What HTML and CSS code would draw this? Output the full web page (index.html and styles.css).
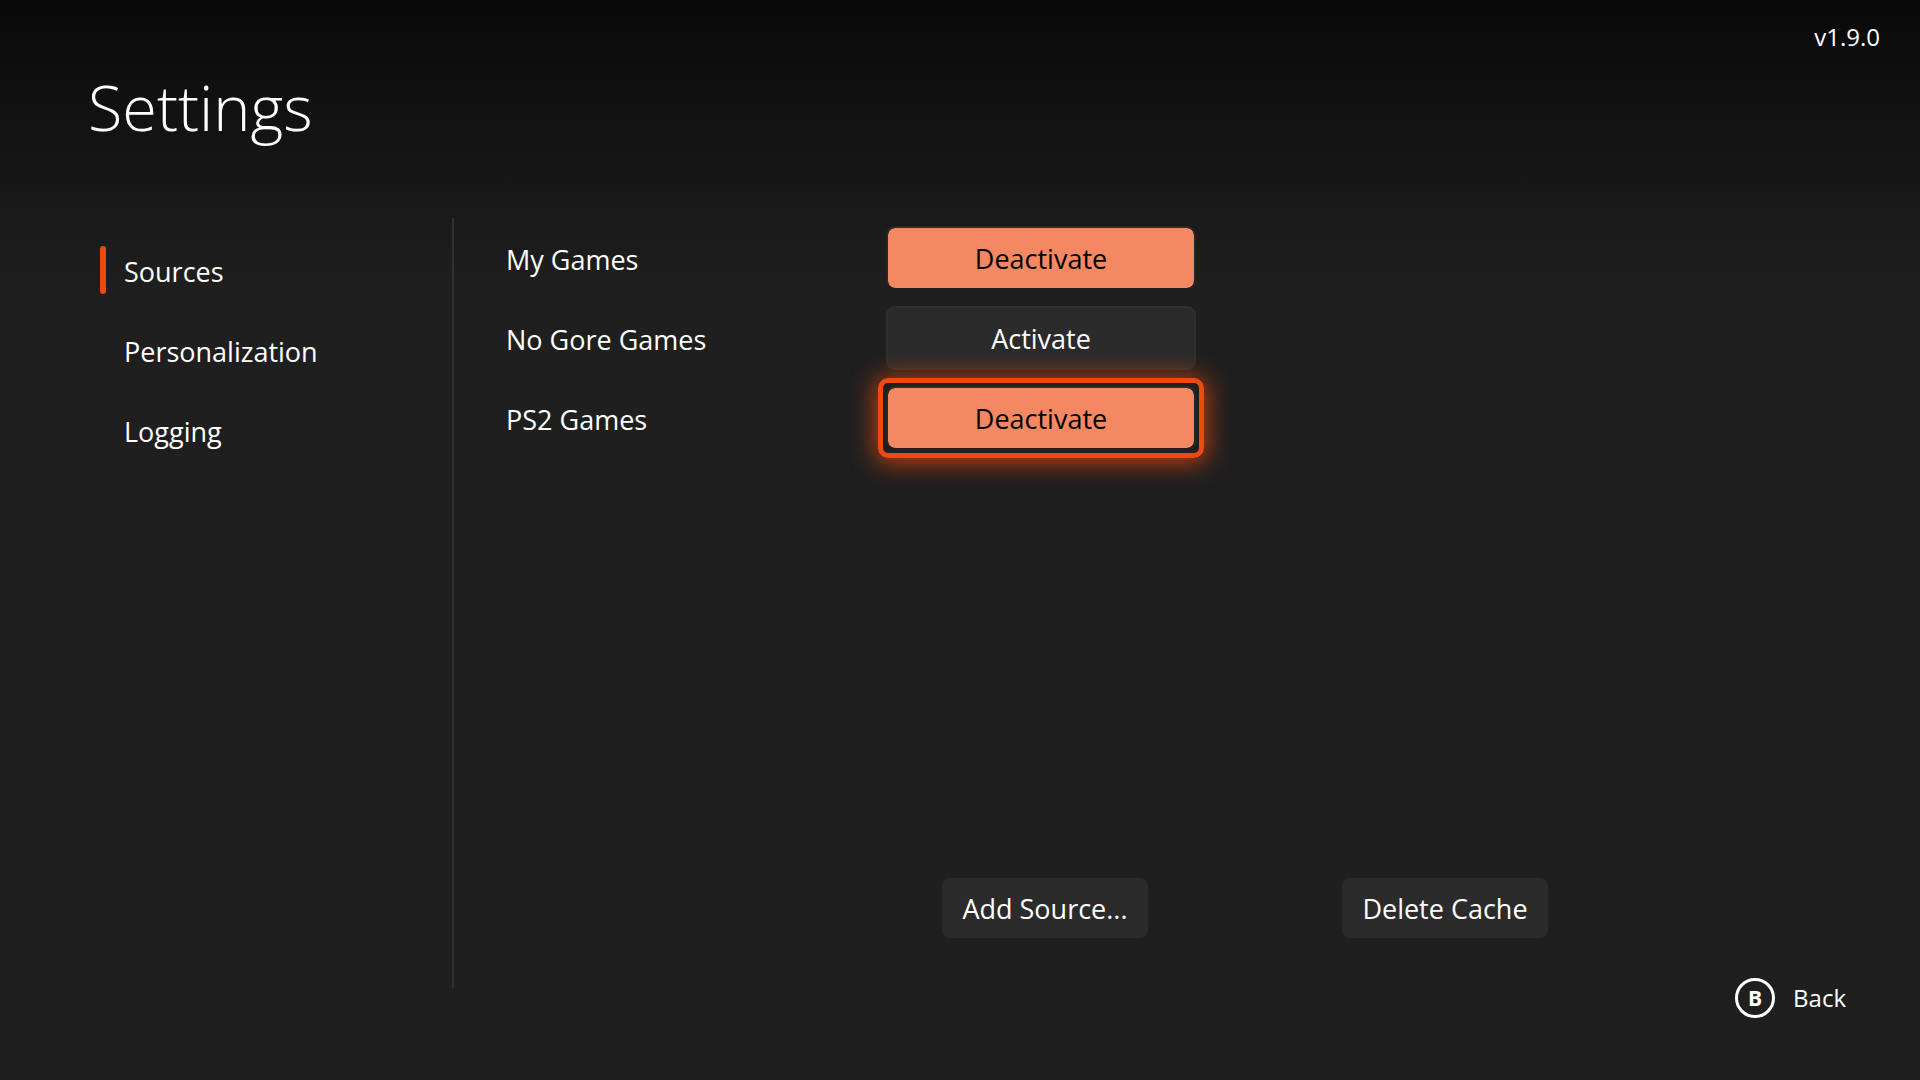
FILE: index.html
```html
<!DOCTYPE html>
<html lang="en">
<head>
<meta charset="utf-8">
<meta name="viewport" content="width=device-width, initial-scale=1">
<title>Settings</title>
<link rel="stylesheet" href="styles.css">
</head>
<body>
<div class="app">
  <header class="top">
    <h1>Settings</h1>
    <span class="version">v1.9.0</span>
  </header>
  <div class="body">
    <nav class="nav">
      <a href="#sources" class="active" aria-current="page">Sources</a>
      <a href="#personalization">Personalization</a>
      <a href="#logging">Logging</a>
    </nav>
    <main class="panel">
      <div class="sources">
        <div class="row"><span id="s1">My Games</span><button class="toggle on" aria-describedby="s1">Deactivate</button></div>
        <div class="row"><span id="s2">No Gore Games</span><button class="toggle" aria-describedby="s2">Activate</button></div>
        <div class="row"><span id="s3">PS2 Games</span><button class="toggle on focused" aria-describedby="s3">Deactivate</button></div>
      </div>
      <div class="actions">
        <button class="action">Add Source...</button>
        <button class="action">Delete Cache</button>
      </div>
    </main>
  </div>
  <footer class="foot">
    <button class="back"><span class="key">B</span><span>Back</span></button>
  </footer>
</div>
</body>
</html>
```

FILE: styles.css
```css
* { box-sizing: border-box; }
body {
  margin: 0;
  color: #fff;
  font: 27px/40px "Open Sans", "Noto Sans", sans-serif;
  background: #1f1f1f;
}
.app {
  min-height: 100vh;
  display: flex;
  flex-direction: column;
  background: linear-gradient(#090909, #1f1f1f 288px);
}
.top {
  display: flex;
  justify-content: space-between;
  align-items: flex-start;
  padding: 20px 40px 64px 88px;
}
h1 { margin: 40px 0 0; font-size: 63px; line-height: 94px; font-weight: 300; }
.version { font-size: 24px; line-height: 34px; }

.body { flex: 1; display: flex; }
.nav {
  width: 454px;
  padding: 24px 0 0 100px;
  border-right: 2px solid #303030;
}
.nav a {
  display: block;
  position: relative;
  height: 80px;
  padding-left: 24px;
  color: #fff;
  line-height: 60px;
  text-decoration: none;
}
.nav .active::before {
  content: "";
  position: absolute;
  left: 0;
  top: 4px;
  width: 6px;
  height: 48px;
  border-radius: 3px;
  background: #ee4a0f;
}
.panel {
  flex: 1;
  display: flex;
  flex-direction: column;
  justify-content: space-between;
  padding: 0 0 50px 52px;
}
.row { display: flex; align-items: center; height: 80px; }
.row > span { width: 380px; padding-top: 4px; }

button { padding: 0; font: inherit; color: inherit; cursor: pointer; }
.toggle {
  position: relative;
  width: 310px;
  height: 64px;
  padding-top: 2px;
  border: 2px solid #303030;
  border-radius: 9px;
  background: #2b2b2b;
}
.toggle.on {
  border-color: #2b2b2b #262626 #1f1f1f;
  background: #f38862;
  background-clip: padding-box;
  color: #000;
}
.focused::after {
  content: "";
  position: absolute;
  inset: -10px;
  border: 5px solid #ee4a0f;
  border-radius: 10px;
  box-shadow: 0 2px 24px 3px rgba(238, 74, 15, 0.75);
}
.actions { display: flex; gap: 194px; padding-left: 436px; }
.action {
  width: 206px;
  height: 60px;
  padding-top: 2px;
  border: 0;
  border-radius: 8px;
  background: #2b2b2b;
}

.foot { display: flex; justify-content: flex-end; padding: 0 74px 62px 0; margin-top: -10px; }
.back {
  display: flex;
  align-items: center;
  gap: 18px;
  border: 0;
  background: none;
  font-size: 24px;
}
.key {
  width: 40px;
  height: 40px;
  border: 3px solid #fff;
  border-radius: 50%;
  font-size: 21px;
  font-weight: 700;
  line-height: 34px;
}
```
